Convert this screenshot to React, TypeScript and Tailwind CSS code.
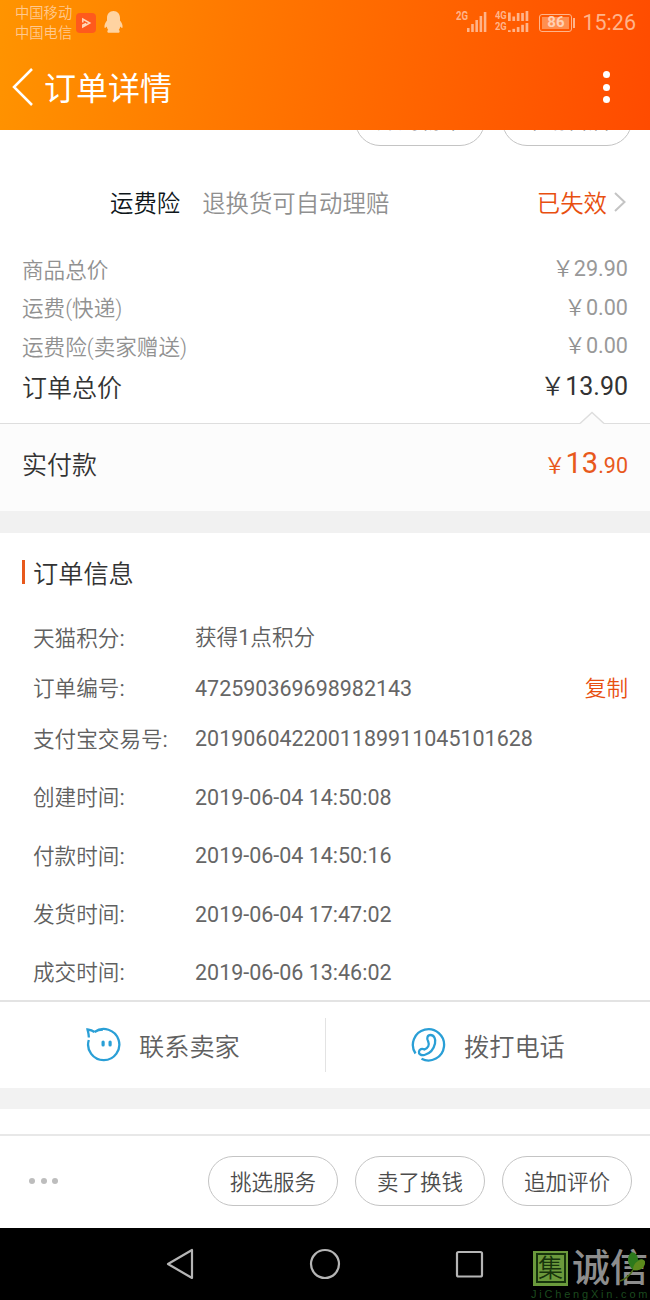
import type { ReactNode } from "react";
import clsx from "clsx";

type TRow = {
  label: string;
  value: ReactNode;
  height: string;
  copy?: boolean;
};

const prices = [
  { label: "商品总价", value: "29.90" },
  { label: "运费(快递)", value: "0.00" },
  { label: "运费险(卖家赠送)", value: "0.00" },
];

const Num = ({ children }: { children: string }) => (
  <span className="text-[21.480px] font-normal text-[#666]">{children}</span>
);

const info: TRow[] = [
  { label: "天猫积分", value: <>获得<Num>1</Num>点积分</>, height: "h-[51px]" },
  { label: "订单编号", value: <Num>472590369698982143</Num>, height: "h-[50px]", copy: true },
  { label: "支付宝交易号", value: <Num>2019060422001189911045101628</Num>, height: "h-[51px]" },
  { label: "创建时间", value: <Num>2019-06-04 14:50:08</Num>, height: "h-[66px]" },
  { label: "付款时间", value: <Num>2019-06-04 14:50:16</Num>, height: "h-[51px]" },
  { label: "发货时间", value: <Num>2019-06-04 17:47:02</Num>, height: "h-[66px]" },
  { label: "成交时间", value: <Num>2019-06-06 13:46:02</Num>, height: "h-[50px]" },
];

const actions = ["挑选服务", "卖了换钱", "追加评价"];

const Signal = ({ className, bars }: { className?: string; bars: number[] }) => (
  <svg className={className} viewBox={`0 0 ${bars.length * 4.6} 20`} preserveAspectRatio="none" fill="currentColor">
    {bars.map((h, i) => (
      <rect key={i} x={i * 4.6} y={20 - h} width="2.8" height={h} />
    ))}
  </svg>
);

const StatusBar = () => (
  <div className="flex h-[45px] items-center pl-[15px] pr-[14px] text-[#ffc98f]">
    <div className="pt-px text-[14.3px] leading-[20px]">
      <div>中国移动</div>
      <div>中国电信</div>
    </div>
    <svg className="ml-1 h-5 w-5" viewBox="0 0 20 20">
      <rect width="20" height="20" rx="4" fill="#ff5a1c" />
      <path d="M6.800 9.500V6l7 4-7 4v-2l3.400-1.700" fill="none" stroke="#ffd9b8" strokeWidth="1.500" />
    </svg>
    <svg className="mb-px ml-2 h-[22px] w-[19px]" viewBox="0 0 19 22" fill="#ffd3a1">
      <path d="M9.500 0C5.500 0 3 3 3 7v2.500C1.500 11.500 0 14 .5 16.500c.3 1 1.500 0 2.300-1 .2 1.500.7 2.500 1.500 3.500-.9.400-1 1-.9 1.700.1.800.6 1 1.500 1h9.200c.9 0 1.400-.2 1.500-1 .1-.7 0-1.300-.9-1.700.8-1 1.300-2 1.500-3.500.8 1 2 2 2.300 1 .5-2.500-1-5-2.500-7V7c0-4-2.500-7-6.500-7z" />
    </svg>
    <div className="ml-auto flex items-center font-normal text-[#ffb48a]">
      <div className="mb-[2px] flex h-[21px] items-end">
        <span className="w-[11px] origin-left self-start scale-x-[.8] text-[12px] font-bold leading-[10px]">2G</span>
        <Signal className="h-5 w-[21px]" bars={[4, 8, 12, 16, 20]} />
      </div>
      <div className="mb-[2px] ml-[7px] flex h-[21px] w-[36px] flex-col gap-px">
        <div className="flex h-[10px] items-end">
          <span className="w-[13px] origin-left scale-x-[.85] text-[11px] font-bold leading-[10px]">4G</span>
          <Signal className="h-[10px] w-[22px]" bars={[17, 9, 16, 16, 20]} />
        </div>
        <div className="flex h-[10px] items-end">
          <span className="w-[13px] origin-left scale-x-[.85] text-[11px] font-bold leading-[10px]">2G</span>
          <Signal className="h-[9px] w-[22px]" bars={[4, 7, 11, 16, 20]} />
        </div>
      </div>
      <div className="ml-[8px] flex h-[18px] w-[33px] items-center rounded-[3px] border border-current p-[2px]">
        <div className="flex h-full w-full items-center justify-center bg-[#ff8f50] text-[15px] font-bold leading-none text-[#ffd0b5]">
          86
        </div>
      </div>
      <div className="ml-[1px] h-[10px] w-[2px] bg-current" />
      <div className="ml-[7px] text-[21.500px] leading-none">15:26</div>
    </div>
  </div>
);

const Header = () => (
  <header className="h-[130px] bg-linear-[100deg,#ff9400,#ff7900_35%,#ff4b00]">
    <StatusBar />
    <div className="flex h-[84px] items-center pl-3 pr-[40px] text-white">
      <svg className="h-[38px] w-[22px]" viewBox="0 0 22 38" fill="none" stroke="currentColor" strokeWidth="2.500">
        <path d="M20 1 2 19l18 18" />
      </svg>
      <h1 className="ml-[10px] pt-[3px] text-[32px] font-normal leading-none">订单详情</h1>
      <div className="ml-auto flex flex-col gap-[5.500px]">
        <i className="h-[7px] w-[7px] rounded-full bg-white" />
        <i className="h-[7px] w-[7px] rounded-full bg-white" />
        <i className="h-[7px] w-[7px] rounded-full bg-white" />
      </div>
    </div>
  </header>
);

const Pill = ({ children, className }: { children: ReactNode; className?: string }) => (
  <button
    className={clsx(
      "flex h-[50px] w-[130px] shrink-0 items-center justify-center rounded-full border border-[#c4c4c4] text-[21.500px] text-[#4c4c4c]",
      className,
    )}
  >
    {children}
  </button>
);

const WangwangIcon = () => (
  <svg className="h-9 w-9" viewBox="0 0 36 36" fill="none" stroke="#2a9fd6" strokeWidth="2.300">
    <path d="M3.800 13A15.600 15.600 0 1 0 9.500 5M3.800 10.500C4 8 3.200 5.500 2.500 2.500 5 2.800 7.500 3.500 9.500 5M9.500 5C12 3.400 15 2.500 18 2.500" />
    <rect x="16.500" y="13.500" width="3.200" height="6" rx="1.600" fill="#2a9fd6" stroke="none" />
    <rect x="23.500" y="13.500" width="3.200" height="6" rx="1.600" fill="#2a9fd6" stroke="none" />
  </svg>
);

const PhoneIcon = () => (
  <svg className="h-9 w-9" viewBox="0 0 36 36" fill="none" stroke="#2a9fd6" strokeWidth="2.300">
    <path d="M5.500 26.500A15.600 15.600 0 1 1 11.500 31.800" />
    <path d="M18.200 14.500c-2-3-.7-6.500 2.300-6.500 3.500 0 5.500 4 4.500 8.500-1.200 5.500-5 10-10.500 11.500-3.500.8-6-.8-5.500-3.500.5-2.500 3-3.300 5.500-2 3.500-1.500 5.200-4.500 3.700-8z" />
  </svg>
);

const Watermark = () => (
  <div className="absolute left-[531px] top-[22px] w-[119px]">
    <div className="flex h-[36px] items-center">
      <div className="ml-[2px] flex h-[35px] w-[35px] shrink-0 items-center justify-center bg-[#6b9a3c]">
        <span className="flex h-[30px] w-[30px] items-center justify-center border-2 border-[#17340c] text-[25px] leading-[25px] text-[#17340c]">
          集
        </span>
      </div>
      <span className="ml-1 whitespace-nowrap text-[38px] font-medium leading-[34px] text-[#8d8d8d]">诚信</span>
    </div>
    <div className="mt-[2px] whitespace-nowrap font-['Liberation_Sans'] text-[11px] leading-[12px] tracking-[2.800px] text-[#1c4a1f]">
      JiChengXin.com
    </div>
    <svg className="absolute left-[86px] top-[1px] h-[32px] w-[30px]" viewBox="0 0 30 32">
      <path d="M16 19C11 14 8 6 15 1c4 1 6 4 6 8 4-2 7 0 7 3-1 6-6 8-12 7z" fill="#2d7a1c" />
      <path d="M16 19c0-6 4-9 8-10.500 3 0 4.500 1.500 4 3.500-1 6-6 8-12 7z" fill="#5d8a1c" />
      <path d="M16 19c-3 5-7 9-13 11" fill="none" stroke="#4d6a1c" strokeWidth="1.500" />
    </svg>
  </div>
);

export default function App() {
  return (
    <div className="h-[1300px] w-[650px] overflow-hidden bg-white font-['Roboto','Noto_Sans_CJK_SC',sans-serif] font-[350] text-[#606060]">
      <Header />

      <div className="flex h-[16px] items-end justify-end gap-[17px] overflow-hidden pr-[18px]">
        <Pill className="pt-px">加购物车</Pill>
        <Pill className="pt-px">申请售后</Pill>
      </div>

      <div className="flex h-[104px] items-center pl-[110px] pr-6 pt-[10px] text-[23.400px]">
        <span className="pt-[3px] text-[#0e161a]">运费险</span>
        <span className="ml-[22px] pt-[3px] text-[#909090]">退换货可自动理赔</span>
        <span className="ml-auto pt-[3px] text-[#e84f10]">已失效</span>
        <svg className="mb-[2px] ml-[7px] h-5 w-3" viewBox="0 0 12 20" fill="none" stroke="#c4c4c4" strokeWidth="2">
          <path d="m1 1 9.500 9L1 19" />
        </svg>
      </div>

      <div className="px-[22px]">
        {prices.map((price) => (
          <div key={price.label} className="flex h-[38.500px] items-center justify-between text-[21.600px] text-[#919191]">
            <span className="pt-[3px]">{price.label}</span>
            <span>
              ￥<span className="font-normal text-[#999]">{price.value}</span>
            </span>
          </div>
        ))}
        <div className="flex h-[44px] items-center justify-between text-[25px] text-[#333]">
          <span className="pt-[3px]">订单总价</span>
          <span className="pb-[2px]">
            ￥<span className="font-normal">13.90</span>
          </span>
        </div>
      </div>

      <div className="relative mt-[13.500px] flex h-[88px] items-center justify-between border-t border-[#dedede] bg-[#fcfcfc] px-[22px]">
        <svg className="absolute right-[45px] top-[-13px] h-[14px] w-[26px]" viewBox="0 0 26 14">
          <path d="M1 12.500 13 1.500l12 11V14H1z" fill="#fcfcfc" />
          <path d="M1 12.500 13 1.500l12 11" fill="none" stroke="#dedede" strokeWidth="1.500" />
        </svg>
        <span className="pb-[3px] text-[25px] text-[#333]">实付款</span>
        <span className="pb-[7px] text-[21.500px] font-normal text-[#e8591c]">
          ￥<span className="text-[29px]">13</span>.90
        </span>
      </div>
      <div className="h-[22px] bg-[#f1f1f1]" />

      <section className="h-[467px] px-[22px]">
        <div className="flex h-[80px] items-center">
          <i className="mb-[2px] h-6 w-[3px] bg-[#e8591c]" />
          <h2 className="ml-[8px] pt-[3px] text-[25.200px] text-[#333]">订单信息</h2>
        </div>
        {info.map((row) => (
          <div key={row.label} className={clsx("flex items-center pl-[11px] text-[21.600px]", row.height)}>
            <span className="w-[162px] shrink-0 pt-px">
              {row.label}
              <span className="font-normal">:</span>
            </span>
            <span>{row.value}</span>
            {row.copy && <button className="ml-auto pt-px text-[#e84f10]">复制</button>}
          </div>
        ))}
      </section>

      <div className="flex h-[88px] items-center border-t-2 border-[#e3e3e3] text-[25.200px]">
        <div className="flex h-[54px] w-[326px] items-center border-r border-[#e3e3e3] pl-[85px]">
          <WangwangIcon />
          <span className="ml-[18px] pt-[5px]">联系卖家</span>
        </div>
        <div className="flex items-center pl-[84px]">
          <PhoneIcon />
          <span className="ml-[18px] pt-[5px]">拨打电话</span>
        </div>
      </div>
      <div className="h-[21px] bg-[#f2f2f2]" />
      <div className="h-[25px]" />

      <div className="flex h-[94px] items-center border-t-2 border-[#e8e8e8] pb-[2px] pl-[29px] pr-[18px]">
        <div className="flex gap-[5.500px]">
          <i className="h-[6px] w-[6px] rounded-full bg-[#bdbdbd]" />
          <i className="h-[6px] w-[6px] rounded-full bg-[#bdbdbd]" />
          <i className="h-[6px] w-[6px] rounded-full bg-[#bdbdbd]" />
        </div>
        <div className="ml-auto flex gap-[17px]">
          {actions.map((action) => (
            <Pill key={action} className="pt-[4px]">
              {action}
            </Pill>
          ))}
        </div>
      </div>

      <nav className="relative h-[72px] bg-black">
        <svg className="h-[72px] w-[650px]" viewBox="0 0 650 72" fill="none" stroke="#b5b5b5" strokeWidth="2.200" strokeLinejoin="round">
          <path d="M192 22v28l-24-14z" />
          <circle cx="325" cy="36" r="14" />
          <rect x="457" y="24" width="25" height="24.500" rx="1.500" />
        </svg>
        <Watermark />
      </nav>
    </div>
  );
}
